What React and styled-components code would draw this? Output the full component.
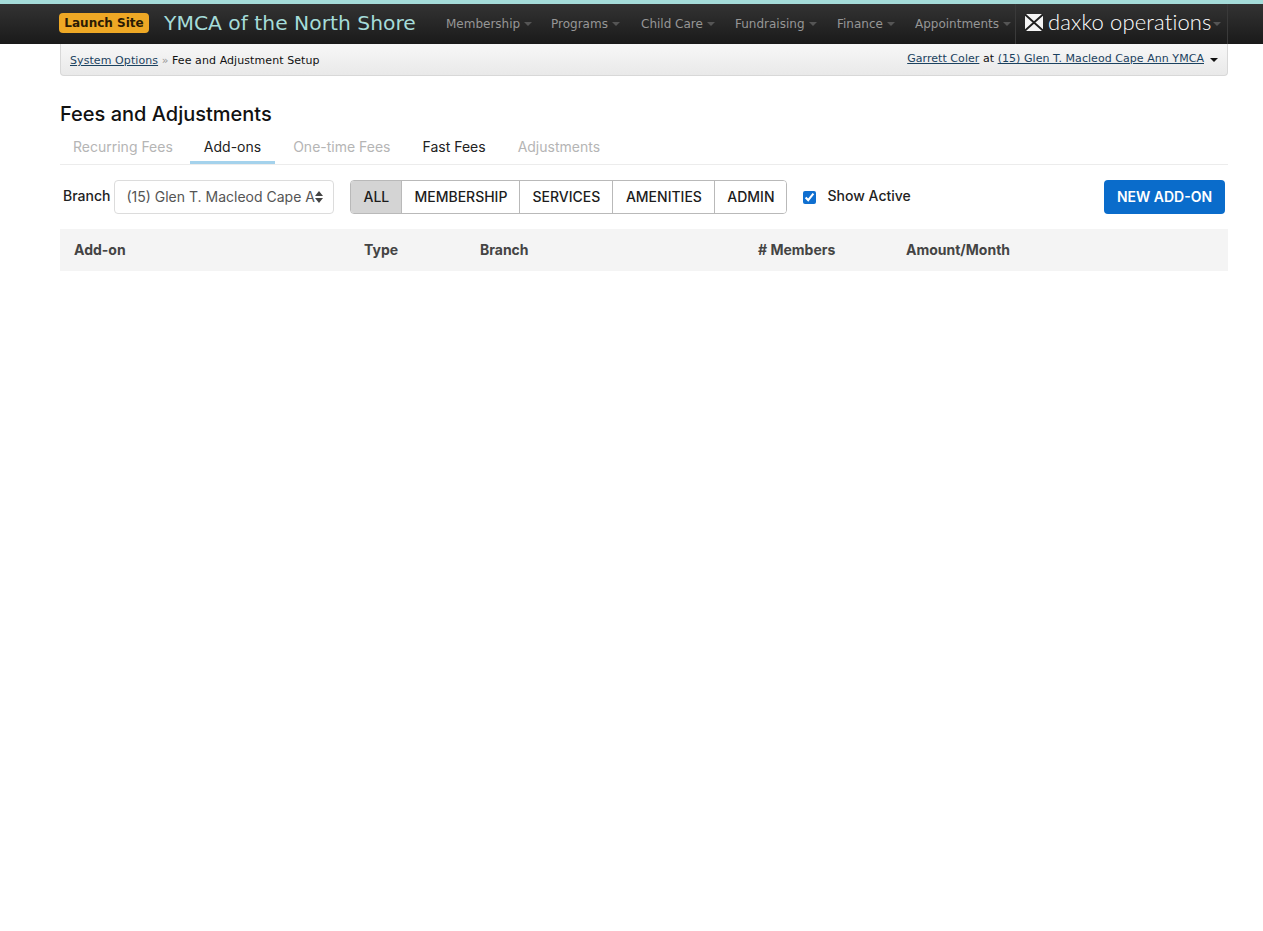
import React from "react";
import styled, { createGlobalStyle } from "styled-components";

const GlobalStyle = createGlobalStyle`
  html, body {
    margin: 0;
    padding: 0;
    background: #fff;
    font-family: "Inter", "Liberation Sans", sans-serif;
  }
  * {
    box-sizing: border-box;
  }
`;

const Page = styled.div`
  width: 1263px;
  min-height: 931px;
  background: #fff;
`;

const TopBar = styled.header`
  height: 44px;
  border-top: 4px solid #a5dcd9;
  background: linear-gradient(to bottom, #333 0%, #1a1a1a 100%);
  padding: 0 35px 0 59px;
`;

const TopInner = styled.div`
  display: flex;
  align-items: center;
  height: 40px;
`;

const LaunchButton = styled.a`
  display: block;
  width: 90px;
  height: 20px;
  margin-bottom: 2px;
  border-radius: 4px;
  background: #eea825;
  color: #2a1a04;
  font: bold 12px/20px "DejaVu Sans", sans-serif;
  text-align: center;
  white-space: nowrap;
`;

const SiteName = styled.div`
  margin: 0 0 2px 15px;
  width: 282px;
  color: #a5dcd9;
  font: 20.3px/38px "DejaVu Sans", sans-serif;
  white-space: nowrap;
`;

const Nav = styled.nav`
  display: flex;
  height: 40px;
  align-items: center;
`;

const NavItem = styled.div`
  display: flex;
  align-items: center;
  width: ${(p) => p.$width}px;
  color: #969696;
  font: 12px/40px "DejaVu Sans", sans-serif;
  white-space: nowrap;
`;

const Caret = styled.span`
  display: inline-block;
  margin-left: ${(p) => p.$gap ?? 4}px;
  width: 0;
  height: 0;
  border-left: 4px solid transparent;
  border-right: 4px solid transparent;
  border-top: 4px solid #555;
`;

const Brand = styled.div`
  display: flex;
  align-items: center;
  width: 213px;
  height: 40px;
  padding-left: 9px;
  border-left: 1px solid #3a3a3a;
  border-right: 1px solid #3a3a3a;
  color: #fff;
`;

const BrandMark = styled.svg`
  margin-bottom: 3px;
`;

const BrandName = styled.span`
  margin: 0 0 4px 5px;
  font: 300 22px/36px "Lato", sans-serif;
  letter-spacing: 0.15px;
  white-space: nowrap;
`;

const Content = styled.main`
  margin: 0 35px 0 60px;
`;

const CrumbBar = styled.div`
  display: flex;
  justify-content: space-between;
  height: 32px;
  padding: 0 9px 0 9px;
  border: 1px solid #d8d8d8;
  border-top: 0;
  border-radius: 0 0 4px 4px;
  background: linear-gradient(to bottom, #f7f7f7 0%, #e9e9e9 100%);
  color: #111;
  font: 11px "DejaVu Sans", sans-serif;
  letter-spacing: 0.08px;
`;

const Crumbs = styled.div`
  padding-top: 10px;
`;

const UserInfo = styled.div`
  display: flex;
  align-items: flex-start;
  padding-top: 8px;
  letter-spacing: 0.05px;
`;

const CrumbLink = styled.a`
  color: #1b4260;
  text-decoration: underline;
`;

const Separator = styled.span`
  color: #999;
`;

const UserCaret = styled.span`
  margin: 6px 0 0 6px;
  width: 0;
  height: 0;
  border-left: 4px solid transparent;
  border-right: 4px solid transparent;
  border-top: 4px solid #111;
`;

const Title = styled.h1`
  margin: 25px 0 0;
  color: #111;
  font-size: 20px;
  font-weight: 450;
  line-height: 26px;
`;

const Tabs = styled.div`
  display: flex;
  height: 38px;
  padding-top: 5px;
  border-bottom: 1px solid #ececec;
`;

const Tab = styled.div`
  height: 32px;
  padding: 0 14px;
  margin-right: 4px;
  color: ${(p) => (p.$enabled ? "#222" : "#b5b5b5")};
  border-bottom: 3px solid ${(p) => (p.$active ? "#a4d2ec" : "transparent")};
  font-size: 14px;
  line-height: 30px;
  white-space: nowrap;

  &:first-child {
    margin-left: -1px;
    margin-right: 3px;
  }
`;

const Toolbar = styled.div`
  display: flex;
  align-items: center;
  height: 34px;
  margin-top: 15px;
  padding: 0 3px;
`;

const FieldLabel = styled.label`
  margin: 0 4px 4px 0;
  color: #222;
  font-size: 14px;
  font-weight: 500;
`;

const SelectBox = styled.div`
  position: relative;
  width: 220px;
  height: 34px;
  padding-left: 11px;
  border: 1px solid #dcdcdc;
  border-radius: 4px;
  background: #fff;
  color: #555;
  font-size: 14px;
  line-height: 32px;
  white-space: nowrap;
`;

const SelectArrows = styled.svg`
  position: absolute;
  top: 10px;
  right: 10px;
`;

const Segments = styled.div`
  display: flex;
  height: 34px;
  margin-left: 16px;
  border: 1px solid #b9b9b9;
  border-radius: 4px;
  overflow: hidden;
`;

const Segment = styled.div`
  width: ${(p) => p.$width}px;
  border-left: ${(p) => (p.$first ? "0" : "1px solid #b9b9b9")};
  background: ${(p) => (p.$active ? "#d4d4d4" : "#fff")};
  color: #1c1c1c;
  font-size: 14px;
  font-weight: 500;
  line-height: 32px;
  text-align: center;
`;

const CheckLabel = styled.label`
  display: flex;
  align-items: center;
  margin: 0 0 4px 16px;
  color: #222;
  font-size: 14px;
  font-weight: 500;
  letter-spacing: 0.02px;
`;

const Check = styled.input`
  width: 13px;
  height: 13px;
  margin: 4px 11px 0 0;
  accent-color: #0f6fd0;
`;

const PrimaryButton = styled.button`
  margin-left: auto;
  width: 121px;
  height: 34px;
  padding: 0 0 1px;
  border: 0;
  border-radius: 4px;
  background: #0a6ccb;
  color: #fff;
  font-family: inherit;
  font-size: 14px;
  font-weight: 600;
`;

const TableHead = styled.div`
  display: grid;
  grid-template-columns: 290px 116px 278px 148px 1fr;
  height: 42px;
  margin-top: 15px;
  padding-left: 14px;
  background: #f4f4f4;
  color: #444;
  font-size: 14px;
  font-weight: 700;
  line-height: 42px;
`;

const navItems = [
  ["Membership", 105],
  ["Programs", 90],
  ["Child Care", 94],
  ["Fundraising", 102],
  ["Finance", 78],
  ["Appointments", 100],
];

const tabs = [
  { label: "Recurring Fees" },
  { label: "Add-ons", enabled: true, active: true },
  { label: "One-time Fees" },
  { label: "Fast Fees", enabled: true },
  { label: "Adjustments" },
];

const segments = [
  ["ALL", 50],
  ["MEMBERSHIP", 118],
  ["SERVICES", 93],
  ["AMENITIES", 102],
  ["ADMIN", 72],
];
const columns = ["Add-on", "Type", "Branch", "# Members", "Amount/Month"];

function DaxkoMark() {
  return (
    <BrandMark width="18" height="17" viewBox="0 0 18 17">
      <rect x="0" y="0" width="18" height="17" rx="2" fill="#f5f5f5" />
      <path d="M0 0.5 L18 16.5 M18 0.5 L0 16.5" fill="none" stroke="#1f1f1f" strokeWidth="2" />
    </BrandMark>
  );
}

export default function App() {
  return (
    <Page>
      <GlobalStyle />
      <TopBar>
        <TopInner>
          <LaunchButton>Launch Site</LaunchButton>
          <SiteName>YMCA of the North Shore</SiteName>
          <Nav>
            {navItems.map(([name, width]) => (
              <NavItem key={name} $width={width}>
                {name}
                <Caret />
              </NavItem>
            ))}
          </Nav>
          <Brand>
            <DaxkoMark />
            <BrandName>daxko operations</BrandName>
            <Caret $gap={1} />
          </Brand>
        </TopInner>
      </TopBar>
      <Content>
        <CrumbBar>
          <Crumbs>
            <CrumbLink>System Options</CrumbLink> <Separator>»</Separator> Fee and Adjustment Setup
          </Crumbs>
          <UserInfo>
            <span>
              <CrumbLink>Garrett Coler</CrumbLink> at <CrumbLink>(15) Glen T. Macleod Cape Ann YMCA</CrumbLink>
            </span>
            <UserCaret />
          </UserInfo>
        </CrumbBar>
        <Title>Fees and Adjustments</Title>
        <Tabs>
          {tabs.map((t) => (
            <Tab key={t.label} $enabled={t.enabled} $active={t.active}>
              {t.label}
            </Tab>
          ))}
        </Tabs>
        <Toolbar>
          <FieldLabel>Branch</FieldLabel>
          <SelectBox>
            (15) Glen T. Macleod Cape A
            <SelectArrows width="8" height="12" viewBox="0 0 8 12">
              <path d="M4 0 L8 5 L0 5 Z M4 12 L8 7 L0 7 Z" fill="#444" />
            </SelectArrows>
          </SelectBox>
          <Segments>
            {segments.map(([s, width], i) => (
              <Segment key={s} $width={width} $first={i === 0} $active={i === 0}>
                {s}
              </Segment>
            ))}
          </Segments>
          <CheckLabel>
            <Check type="checkbox" defaultChecked />
            Show Active
          </CheckLabel>
          <PrimaryButton>NEW ADD-ON</PrimaryButton>
        </Toolbar>
        <TableHead>
          {columns.map((c) => (
            <div key={c}>{c}</div>
          ))}
        </TableHead>
      </Content>
    </Page>
  );
}
